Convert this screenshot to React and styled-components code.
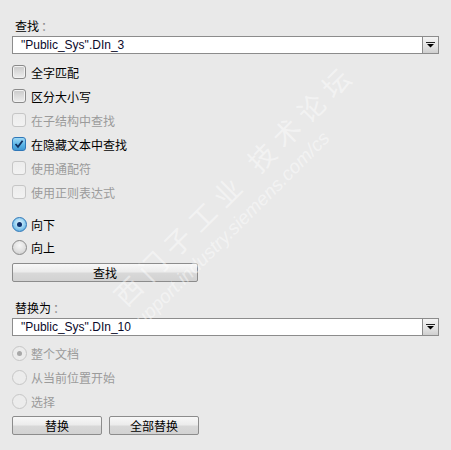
import React from "react";
import styled, { createGlobalStyle, css } from "styled-components";

const Global = createGlobalStyle`
  html, body { margin: 0; padding: 0; background: #e9e9e9; }
  body { font-family: "Noto Sans CJK SC", "Noto Sans", sans-serif; }
`;

const Page = styled.div`
  position: relative;
  width: 451px;
  height: 450px;
  overflow: hidden;
  background: #e9e9e9;
  padding: 18px 12px 0 12px;
  box-sizing: border-box;
  display: flex;
  flex-direction: column;
  font-family: "Noto Sans CJK SC", "Noto Sans", sans-serif;
  font-size: 12px;
  color: #000;
`;

const Label = styled.div`
  height: 16px;
  line-height: 16px;
  padding-left: 3px;
  margin-top: ${(p) => p.$mt || 0}px;
  & > span { color: #888; margin-left: 2px; }
`;

const Combo = styled.div`
  margin-top: 2px;
  width: 427px;
  height: 18px;
  box-sizing: border-box;
  border: 1px solid #8c8c8c;
  background: #fff;
  display: flex;
  align-items: stretch;
`;

const ComboText = styled.div`
  flex: 1;
  padding-left: 8px;
  line-height: 16px;
  font-family: "Liberation Sans", Arial, sans-serif;
  font-size: 12px;
  color: #0a0a2a;
`;

const ComboButton = styled.div`
  width: 15px;
  border-left: 1px solid #8c8c8c;
  background: linear-gradient(180deg, #f4f4f4 0%, #e2e2e2 60%, #cfcfcf 100%);
  display: flex;
  align-items: center;
  justify-content: center;
`;

const OptionList = styled.div`
  display: flex;
  flex-direction: column;
  margin-top: ${(p) => p.$mt || 0}px;
`;

const Row = styled.div`
  height: ${(p) => p.$h || 24}px;
  display: flex;
  align-items: center;
  gap: ${(p) => p.$gap || 5}px;
  color: ${(p) => (p.$disabled ? "#9b9b9b" : "#000")};
`;

const Box = styled.div`
  width: 14px;
  height: 14px;
  box-sizing: border-box;
  border-radius: 3px;
  display: flex;
  align-items: center;
  justify-content: center;
  ${(p) =>
    p.$checked
      ? css`
          border: 1px solid #2f77b8;
          background: linear-gradient(180deg, #9fd9f6 0%, #5cb5e6 55%, #3f98d4 100%);
        `
      : p.$disabled
      ? css`
          border: 1px solid #c6c6c6;
          background: linear-gradient(180deg, #ececec, #f2f2f2);
        `
      : css`
          border: 1px solid #8a8a8a;
          background: linear-gradient(180deg, #c9c9c9 0%, #dcdcdc 50%, #eeeeee 100%);
          box-shadow: inset 0 0 0 1px #f2f2f2;
        `}
`;

const Radio = styled.div`
  width: 15px;
  height: 15px;
  box-sizing: border-box;
  border-radius: 50%;
  display: flex;
  align-items: center;
  justify-content: center;
  ${(p) =>
    p.$checked
      ? css`
          border: 1px solid #2f77b8;
          background: radial-gradient(circle at 50% 40%, #e8f6fd 0%, #9fd6f3 45%, #3f98d4 100%);
        `
      : p.$disabled
      ? css`
          border: 1px solid #c6c6c6;
          background: #ececec;
        `
      : css`
          border: 1px solid #8a8a8a;
          background: radial-gradient(circle at 50% 35%, #f6f6f6 0%, #dedede 60%, #c4c4c4 100%);
        `}
`;

const Dot = styled.div`
  width: 5px;
  height: 5px;
  border-radius: 50%;
  background: ${(p) => (p.$disabled ? "#a8a8a8" : "#0d2f6b")};
`;

const Button = styled.div`
  box-sizing: border-box;
  width: ${(p) => p.$w}px;
  height: 19px;
  border: 1px solid #8c8c8c;
  border-radius: 2px;
  background: linear-gradient(180deg, #f8f8f8 0%, #ececec 45%, #d8d8d8 55%, #d2d2d2 100%);
  display: flex;
  align-items: center;
  justify-content: center;
  font-size: 12px;
  color: #000;
`;

const ButtonRow = styled.div`
  display: flex;
  gap: 7px;
  margin-top: ${(p) => p.$mt || 0}px;
`;

const Watermark = styled.div`
  position: absolute;
  left: ${(p) => p.$x}px;
  top: ${(p) => p.$y}px;
  transform: rotate(-45deg);
  transform-origin: left top;
  white-space: nowrap;
  color: rgba(255, 255, 255, 0.45);
  font-size: ${(p) => p.$size}px;
  font-family: ${(p) => (p.$latin ? '"Liberation Sans", Arial, sans-serif' : '"Noto Sans CJK SC", sans-serif')};
  font-style: ${(p) => (p.$latin ? "italic" : "normal")};
  letter-spacing: ${(p) => p.$ls || 0}px;
  pointer-events: none;
`;

const Arrow = () => (
  <svg width="9" height="6" viewBox="0 0 9 6">
    <rect x="0" y="0" width="9" height="1" fill="#222" />
    <polygon points="1,2 8,2 4.5,5.5" fill="#000" />
  </svg>
);

const Check = () => (
  <svg width="10" height="10" viewBox="0 0 10 10">
    <path d="M1.5 5 L4 7.8 L8.6 1.8" stroke="#10305f" strokeWidth="1.8" fill="none" />
  </svg>
);

const CheckRow = ({ label, checked, disabled }) => (
  <Row $disabled={disabled}>
    <Box $checked={checked} $disabled={disabled}>{checked && <Check />}</Box>
    <span>{label}</span>
  </Row>
);

const RadioRow = ({ label, checked, disabled, h }) => (
  <Row $disabled={disabled} $h={h} $gap={4}>
    <Radio $checked={checked && !disabled} $disabled={disabled}>
      {checked && <Dot $disabled={disabled} />}
    </Radio>
    <span>{label}</span>
  </Row>
);

export default function App() {
  return (
    <>
      <Global />
      <Page>
        <Label>查找<span>：</span></Label>
        <Combo>
          <ComboText>"Public_Sys".DIn_3</ComboText>
          <ComboButton><Arrow /></ComboButton>
        </Combo>
        <OptionList $mt={6}>
          <CheckRow label="全字匹配" />
          <CheckRow label="区分大小写" />
          <CheckRow label="在子结构中查找" disabled />
          <CheckRow label="在隐藏文本中查找" checked />
          <CheckRow label="使用通配符" disabled />
          <CheckRow label="使用正则表达式" disabled />
        </OptionList>
        <OptionList $mt={9}>
          <RadioRow label="向下" checked h={23} />
          <RadioRow label="向上" h={23} />
        </OptionList>
        <ButtonRow $mt={4}>
          <Button $w={186}>查找</Button>
        </ButtonRow>
        <Label $mt={18}>替换为<span>：</span></Label>
        <Combo>
          <ComboText>"Public_Sys".DIn_10</ComboText>
          <ComboButton><Arrow /></ComboButton>
        </Combo>
        <OptionList $mt={5}>
          <RadioRow label="整个文档" checked disabled />
          <RadioRow label="从当前位置开始" disabled />
          <RadioRow label="选择" disabled />
        </OptionList>
        <ButtonRow $mt={3}>
          <Button $w={90}>替换</Button>
          <Button $w={90}>全部替换</Button>
        </ButtonRow>
        <Watermark $x={104} $y={286} $size={27} $ls={8}>西门子工业 技术论坛</Watermark>
        <Watermark $x={124} $y={322} $size={19} $latin>support.industry.siemens.com/cs</Watermark>
      </Page>
    </>
  );
}
